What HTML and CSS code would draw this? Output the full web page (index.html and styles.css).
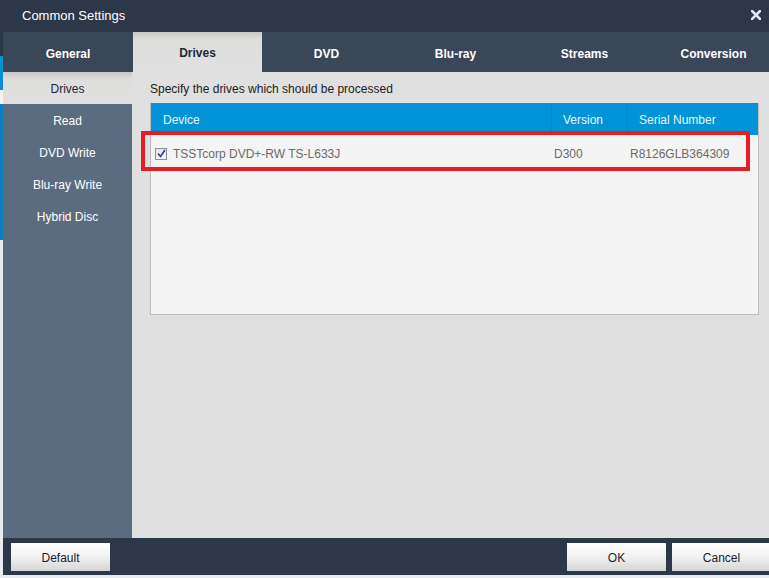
FILE: index.html
```html
<!DOCTYPE html>
<html>
<head>
  <title>Common Settings</title>
  <link rel="stylesheet" href="styles.css">
</head>
<body>
  <div class="dialog">
    <div class="titlebar">
      <span class="title">Common Settings</span>
      <svg class="close" width="10" height="10" viewBox="0 0 10 10">
        <path d="M1 1 L9 9 M9 1 L1 9" stroke="#dfe6ee" stroke-width="2.6" stroke-linecap="square"/>
      </svg>
    </div>

    <div class="tabs">
      <div class="tab">General</div>
      <div class="tab active">Drives</div>
      <div class="tab">DVD</div>
      <div class="tab">Blu-ray</div>
      <div class="tab">Streams</div>
      <div class="tab">Conversion</div>
    </div>

    <div class="main">
      <div class="sidebar">
        <div class="side-item active">Drives</div>
        <div class="side-item">Read</div>
        <div class="side-item">DVD Write</div>
        <div class="side-item">Blu-ray Write</div>
        <div class="side-item">Hybrid Disc</div>
      </div>

      <div class="content">
        <p class="hint">Specify the drives which should be processed</p>
        <div class="table">
          <div class="table-head">
            <div class="col col-device">Device</div>
            <div class="col col-version">Version</div>
            <div class="col col-serial">Serial Number</div>
          </div>
          <div class="table-row">
            <div class="cell col-device">
              <span class="check">
                <svg width="9" height="9" viewBox="0 0 9 9">
                  <path d="M1 4.5 L3.5 7.5 L8 1" fill="none" stroke="#2b3c8c" stroke-width="1.6"/>
                </svg>
              </span>
              TSSTcorp DVD+-RW TS-L633J
            </div>
            <div class="cell col-version">D300</div>
            <div class="cell col-serial">R8126GLB364309</div>
          </div>
          <div class="highlight"></div>
        </div>
      </div>
    </div>

    <div class="footer">
      <button class="btn">Default</button>
      <div class="footer-right">
        <button class="btn">OK</button>
        <button class="btn">Cancel</button>
      </div>
    </div>
  </div>
</body>
</html>
```

FILE: styles.css
```css
* {
  margin: 0;
  padding: 0;
  box-sizing: border-box;
  font-family: "Liberation Sans", Arial, sans-serif;
}

body {
  width: 769px;
  height: 578px;
  overflow: hidden;
  background: linear-gradient(to bottom, #2c3748 0, #2c3748 56px, #0a8ed2 56px, #0a8ed2 90px, #f2f4f6 90px, #f2f4f6 104px, #0a7fc2 104px, #0a7fc2 240px, #e8ecf0 240px);
}

.dialog {
  margin-left: 3px;
  width: 766px;
  height: 575px;
  display: flex;
  flex-direction: column;
  overflow: hidden;
  background-color: #2c3748;
}

/* Title bar */
.titlebar {
  height: 32px;
  flex-shrink: 0;
  display: flex;
  align-items: center;
  justify-content: space-between;
  padding: 0 8px 0 19px;
  background-color: #2c3748;
}

.title {
  font-size: 13px;
  color: #ffffff;
  margin-top: -2px;
}

.close {
  margin-top: -2px;
}

/* Tabs */
.tabs {
  height: 40px;
  flex-shrink: 0;
  display: flex;
  background-color: #3a4758;
}

.tab {
  width: 129px;
  flex-shrink: 0;
  display: flex;
  align-items: center;
  justify-content: center;
  padding-top: 4px;
  font-size: 12px;
  font-weight: bold;
  color: #ffffff;
}

.tab:first-child {
  width: 130px;
}

.tab.active {
  background: linear-gradient(to bottom, #c9c8c6 0, #dededd 8px, #e0e0e0 100%);
  color: #1f2a38;
  padding-top: 1px;
}

/* Main area */
.main {
  height: 466px;
  flex-shrink: 0;
  display: flex;
}

.sidebar {
  width: 129px;
  flex-shrink: 0;
  background-color: #5b6c80;
}

.side-item {
  height: 32px;
  display: flex;
  align-items: center;
  justify-content: center;
  padding-top: 2px;
  font-size: 12px;
  color: #ffffff;
}

.side-item.active {
  background: linear-gradient(to bottom, #c9c8c6 0, #dededd 8px, #e0e0e0 100%);
  color: #1f2a38;
}

.content {
  flex: 1;
  background-color: #e0e0e0;
  padding: 10px 10px 0 18px;
}

.hint {
  font-size: 12px;
  color: #1c1c1c;
  height: 21px;
}

.table {
  position: relative;
  width: 609px;
  height: 212px;
  border: 1px solid #bcbcbc;
  border-top: none;
  background-color: #f3f4f3;
}

.table-head {
  height: 32px;
  display: flex;
  padding-top: 1px;
  background-color: #0094d6;
}

.table-head .col {
  display: flex;
  align-items: center;
  padding-left: 11px;
  font-size: 12px;
  color: #eaf4fb;
  border-right: 1px solid #0a84bf;
}

.table-head .col-device {
  padding-left: 12px;
}

.table-head .col:last-child {
  border-right: none;
}

.col-device {
  width: 401px;
}

.col-version {
  width: 76px;
}

.col-serial {
  flex: 1;
}

.table-row {
  height: 36px;
  display: flex;
  padding-top: 1px;
}

.cell {
  display: flex;
  align-items: center;
  padding-left: 2px;
  font-size: 12px;
  color: #6b6b6b;
}

.table-row .col-device {
  padding-left: 4px;
}

.check {
  width: 12px;
  height: 12px;
  margin-right: 6px;
  border: 1px solid #8e8f8f;
  background: linear-gradient(to bottom, #e6e6e6, #f8f8f8);
  display: inline-flex;
  align-items: center;
  justify-content: center;
}

.highlight {
  position: absolute;
  left: -10px;
  top: 28px;
  width: 609px;
  height: 40px;
  border: 4px solid #e81c25;
}

/* Footer */
.footer {
  height: 37px;
  flex-shrink: 0;
  display: flex;
  justify-content: space-between;
  padding: 5px 0 0 8px;
  background-color: #2c3748;
}

.footer-right {
  display: flex;
  gap: 6px;
  margin-right: -2px;
}

.btn {
  width: 99px;
  height: 28px;
  border: none;
  padding-top: 2px;
  font-size: 12px;
  color: #1e1e2e;
  background: linear-gradient(to bottom, #ffffff 0, #f1f1f1 50%, #d6d6d6 100%);
}
```
